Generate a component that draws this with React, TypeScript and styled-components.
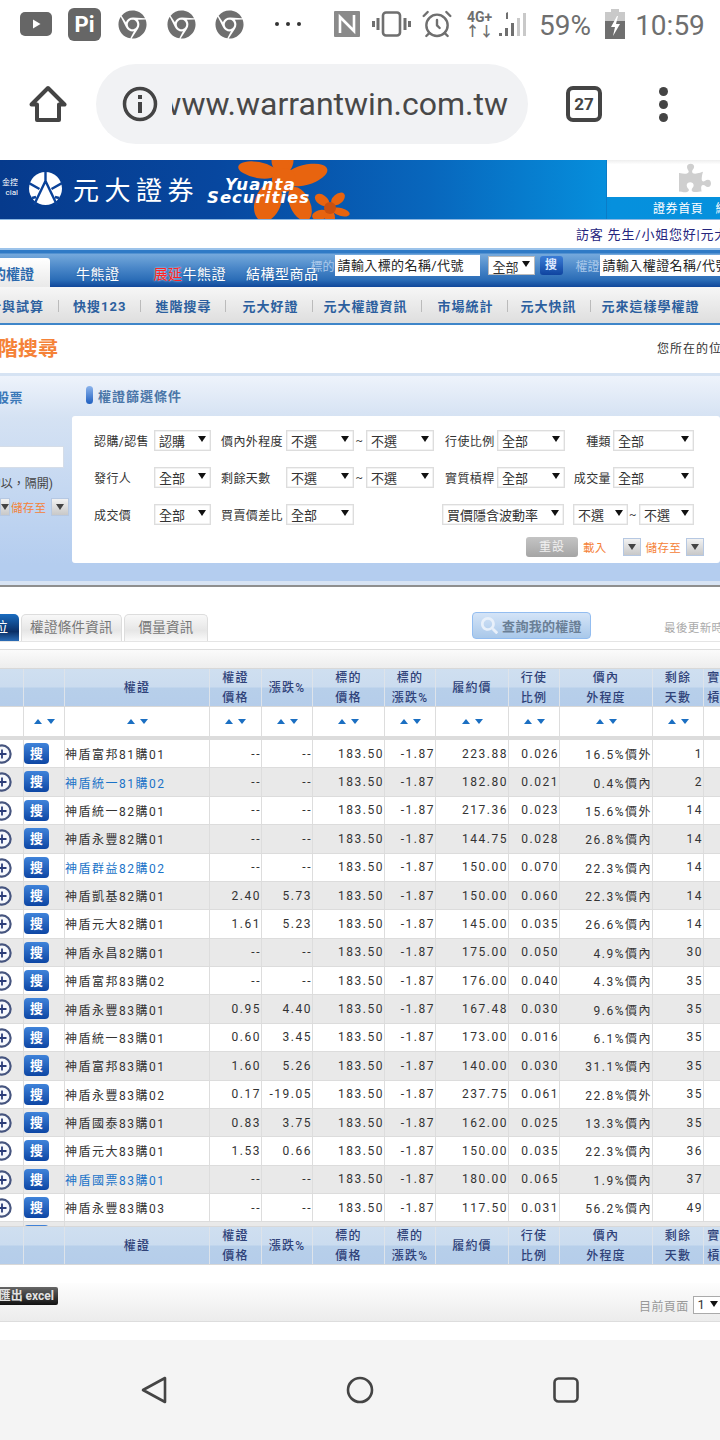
import React from 'react'
import styled, { createGlobalStyle } from 'styled-components'
import { AlarmClock } from 'lucide-react'
import { FaChrome, FaPuzzlePiece, FaSearch } from 'react-icons/fa'

const FONT = `Roboto, 'Noto Sans CJK TC', sans-serif`
const COLS = '24px 41px 145px 52px 51px 72px 51px 73px 51px 93px 51px 34px'

const GlobalStyle = createGlobalStyle`
  html, body { margin: 0; padding: 0; background: #fff; }
  body { font-family: ${FONT}; }
`
const Page = styled.div`
  width: 720px;
  height: 1440px;
  overflow: hidden;
  display: flex;
  flex-direction: column;
  background: #fff;
`

/* android chrome */
const StatusBar = styled.div`
  height: 48px;
  flex: none;
  display: flex;
  align-items: center;
  color: #6f6f6f;
`
const Slot = styled.div<{ $w: number; $ml: number }>`
  width: ${({ $w }) => $w}px;
  margin-left: ${({ $ml }) => $ml}px;
  flex: none;
  display: flex;
  align-items: center;
  justify-content: center;
`
const PiBadge = styled.div`
  width: 33px;
  height: 33px;
  border-radius: 6px;
  background: #666;
  color: #fff;
  font-size: 22px;
  font-weight: 700;
  text-align: center;
  line-height: 33px;
`
const StatusText = styled.div`
  font-size: 28px;
  line-height: 32px;
  margin-top: 3px;
  white-space: nowrap;
`
const NetText = styled.div`
  font-size: 14px;
  line-height: 14px;
  font-weight: 700;
  text-align: center;
  white-space: pre;
`
const Toolbar = styled.div`
  height: 112px;
  flex: none;
  display: flex;
  align-items: center;
  color: #444;
`
const UrlPill = styled.div`
  width: 432px;
  height: 80px;
  margin: 0 0 0 29px;
  border-radius: 40px;
  background: #f1f2f4;
  display: flex;
  align-items: center;
  padding: 0 20px 0 26px;
  box-sizing: border-box;
`
const InfoIcon = styled.svg`
  flex: none;
`
const UrlClip = styled.div`
  flex: 1;
  margin-left: 14px;
  overflow: hidden;
  display: flex;
  justify-content: flex-end;
  font-size: 32px;
  color: #484848;
  white-space: nowrap;
`
const TabCount = styled.div`
  width: 36px;
  height: 36px;
  box-sizing: border-box;
  margin-left: 38px;
  border: 4px solid #444;
  border-radius: 7px;
  font-size: 17px;
  font-weight: 700;
  line-height: 28px;
  text-align: center;
  color: #444;
`
const MenuDots = styled.div`
  margin-left: 57px;
  display: flex;
  flex-direction: column;
  gap: 4px;
  i {
    width: 9px;
    height: 9px;
    border-radius: 50%;
    background: #444;
  }
`

/* site banner */
const Banner = styled.div`
  height: 60px;
  flex: none;
  display: flex;
  background: linear-gradient(90deg, #063a8c 0%, #07479f 30%, #0867bd 60%, #0690dd 85%, #0591dd 100%);
  border-bottom: 1px solid #8db8e2;
  box-sizing: border-box;
  color: #fff;
  overflow: hidden;
`
const BrandArea = styled.div`
  position: relative;
  flex: 1;
  display: flex;
  align-items: center;
`
const TinyBrand = styled.div`
  width: 18px;
  font-size: 8px;
  line-height: 10px;
  white-space: nowrap;
  overflow: hidden;
  display: flex;
  flex-direction: column;
  align-items: flex-end;
  margin-top: -3px;
`
const LogoSvg = styled.svg`
  margin-left: 11px;
  flex: none;
  margin-top: -2px;
`
const BrandName = styled.div`
  margin: -3px 0 0 11px;
  font-size: 26px;
  letter-spacing: 5.5px;
  white-space: nowrap;
`
const Flowers = styled.svg`
  position: absolute;
  left: 236px;
  top: 0;
`
const BrandLatin = styled.div`
  position: relative;
  margin: 3px 0 0 8px;
  font: italic 700 16px/13px 'DejaVu Sans', sans-serif;
  white-space: nowrap;
  b {
    display: block;
    padding-left: 18px;
    font-size: 16.5px;
    letter-spacing: 1.2px;
  }
  span {
    display: block;
    font-size: 16.5px;
    letter-spacing: 1px;
  }
`
const BannerSide = styled.div`
  width: 114px;
  flex: none;
  border-left: 1px solid #0a7cc7;
  box-sizing: border-box;
  display: flex;
  flex-direction: column;
`
const PuzzleBox = styled.div`
  height: 37px;
  flex: none;
  background: linear-gradient(#eee, #fff 12%);
  color: #cfcfcf;
  padding: 2px 0 0 72px;
  box-sizing: border-box;
`
const SideLinks = styled.div`
  padding-left: 46px;
  font-size: 12px;
  line-height: 24px;
  letter-spacing: 0.6px;
  white-space: nowrap;
  display: flex;
  gap: 12px;
`
const Greeting = styled.div`
  height: 28px;
  flex: none;
  padding: 1px 0 0 576px;
  box-sizing: border-box;
  font-size: 13px;
  line-height: 28px;
  letter-spacing: 0.8px;
  color: #25257e;
  white-space: nowrap;
  overflow: hidden;
`

/* main navigation */
const MainNav = styled.div`
  height: 39px;
  flex: none;
  box-sizing: border-box;
  border-top: 2px solid #9cc3ea;
  background: linear-gradient(#2f7ac6 0, #2f7ac6 3px, #75a9dc 4px, #4a87c8 18px, #2a6cb6 30px, #10479a 37px);
  display: flex;
  align-items: flex-end;
  color: #fff;
  overflow: hidden;
  white-space: nowrap;
`
const ActiveTab = styled.div`
  width: 50px;
  height: 29px;
  flex: none;
  overflow: hidden;
  display: flex;
  justify-content: flex-end;
  background: linear-gradient(#fff, #e9e9e9);
  border-radius: 0 3px 0 0;
  color: #2c69ad;
  font-size: 14px;
  font-weight: 700;
  line-height: 32px;
  padding-right: 16px;
  box-sizing: border-box;
`
const NavTab = styled.div<{ $ml: number }>`
  margin-left: ${({ $ml }) => $ml}px;
  height: 29px;
  font-size: 14px;
  letter-spacing: 0.5px;
  line-height: 32px;
  text-shadow: 0 0 2px rgba(20, 60, 120, 0.5);
  em {
    color: #f22;
    font-style: normal;
    text-shadow: 0 0 2px #fff;
  }
`
const NavSearch = styled.div`
  align-self: stretch;
  margin-left: -8px;
  display: flex;
  align-items: center;
  padding-bottom: 6px;
  font-size: 12px;
  color: #a9c8ea;
`
const SearchInput = styled.div<{ $w: number }>`
  width: ${({ $w }) => $w}px;
  height: 21px;
  flex: none;
  box-sizing: border-box;
  background: #fff;
  color: #222;
  font-size: 13px;
  line-height: 22px;
  letter-spacing: 0.4px;
  padding-left: 3px;
  overflow: hidden;
`
const ArrowGlyph = styled.i`
  position: absolute;
  right: 4px;
  top: 4px;
  border-style: solid;
  border-width: 6px 4px 0;
  border-color: #111 transparent transparent;
`
const NavSelect = styled.div`
  width: 47px;
  height: 19px;
  margin-left: 8px;
  box-sizing: border-box;
  background: #fff;
  border: 1px solid #bbb;
  color: #333;
  font-size: 13px;
  line-height: 21px;
  padding-left: 4px;
  position: relative;
`
const SearchBtn = styled.div`
  width: 23px;
  height: 19px;
  margin: 0 13px 0 5px;
  border-radius: 3px;
  background: linear-gradient(#3a7cd6, #0f44a0);
  color: #dfeaff;
  font-size: 12px;
  font-weight: 700;
  line-height: 19px;
  text-align: center;
`
const SubNav = styled.div`
  height: 38px;
  flex: none;
  box-sizing: border-box;
  padding-top: 1px;
  background: linear-gradient(#f6f6f6, #dedede);
  border-bottom: 2px solid #3f86c9;
  display: flex;
  align-items: center;
  gap: 14px;
  color: #2c5f9e;
  font-size: 13px;
  font-weight: 700;
  letter-spacing: 1px;
  white-space: nowrap;
  overflow: hidden;
`
const SubFirst = styled.div`
  width: 44px;
  flex: none;
  overflow: hidden;
  display: flex;
  justify-content: flex-end;
`
const SubItem = styled.div<{ $dx: number }>`
  margin-left: ${({ $dx }) => $dx}px;
`
const SubSep = styled.i`
  width: 1px;
  height: 12px;
  flex: none;
  background: #bbb;
`

/* page title */
const TitleRow = styled.div`
  height: 48px;
  flex: none;
  box-sizing: border-box;
  padding-bottom: 4px;
  display: flex;
  align-items: center;
  justify-content: space-between;
  white-space: nowrap;
`
const PageTitle = styled.div`
  width: 58px;
  overflow: hidden;
  display: flex;
  justify-content: flex-end;
  color: #f58238;
  font-size: 20px;
  font-weight: 700;
`
const Crumb = styled.div`
  width: 63px;
  overflow: hidden;
  color: #333;
  font-size: 12px;
  letter-spacing: 1px;
`

/* filter panel */
const FilterPanel = styled.div`
  height: 212px;
  flex: none;
  box-sizing: border-box;
  display: flex;
  border-top: 3px solid #d6e3f3;
  border-bottom: 4px solid #d8e4f4;
  box-shadow: 0 2px 0 #8f8f8f;
  background: linear-gradient(#eef3fb, #d5e2f3 20%, #b4cdef 92%);
`
const FilterSide = styled.div`
  width: 72px;
  flex: none;
  color: #3a78b8;
  white-space: nowrap;
`
const SideTitle = styled.div`
  height: 40px;
  width: 23px;
  overflow: hidden;
  display: flex;
  justify-content: flex-end;
  align-items: center;
  font-size: 13px;
  font-weight: 700;
  letter-spacing: 0.5px;
`
const SideInput = styled.div`
  width: 64px;
  height: 22px;
  margin-top: 30px;
  background: #fff;
  border: 1px solid #d5dde8;
  border-left: 0;
  box-sizing: border-box;
`
const SideHint = styled.div`
  width: 53px;
  margin-top: 6px;
  overflow: hidden;
  display: flex;
  justify-content: flex-end;
  color: #444;
  font-size: 12px;
  line-height: 20px;
`
const SideActions = styled.div`
  margin-top: 4px;
  display: flex;
  align-items: center;
  gap: 1px;
`
const OrangeLink = styled.span<{ $ml?: number }>`
  margin-left: ${({ $ml }) => $ml ?? 0}px;
  flex: none;
  color: #f58238;
  font-size: 11.5px;
  letter-spacing: 0.3px;
`
const ArrowBtn = styled.div<{ $w?: number; $ml?: number }>`
  width: ${({ $w }) => $w ?? 18}px;
  height: 18px;
  margin-left: ${({ $ml }) => $ml ?? 0}px;
  flex: none;
  box-sizing: border-box;
  border: 1px solid #b6c8e2;
  background: linear-gradient(#f2f2f2, #c8c8c8);
  display: flex;
  align-items: center;
  justify-content: center;
  &::after {
    content: '';
    border-style: solid;
    border-width: 6px 4px 0;
    border-color: #444 transparent transparent;
  }
`
const FilterMain = styled.div`
  flex: 1;
  min-width: 0;
`
const FilterHead = styled.div`
  height: 40px;
  box-sizing: border-box;
  padding: 0 0 2px 14px;
  display: flex;
  align-items: center;
  gap: 5px;
  color: #4a76a8;
  font-size: 13px;
  font-weight: 700;
  letter-spacing: 1px;
  i {
    width: 7px;
    height: 18px;
    border-radius: 4px;
    background: linear-gradient(#8cb4ec, #1f5fc0);
  }
`
const FilterCard = styled.div`
  height: 147px;
  background: #fff;
  border-radius: 3px;
  box-sizing: border-box;
  padding: 13px 0 0 22px;
  color: #333;
  font-size: 12px;
  letter-spacing: 0.4px;
  white-space: nowrap;
`
const FormRow = styled.div<{ $cols: string }>`
  height: 22px;
  margin-bottom: 15px;
  display: grid;
  grid-template-columns: ${({ $cols }) => $cols};
  align-items: center;
`
const FieldLabel = styled.div<{ $right?: boolean; $pl?: number }>`
  padding-left: ${({ $pl }) => $pl ?? 0}px;
  text-align: ${({ $right }) => ($right ? 'right' : 'left')};
  padding-right: ${({ $right }) => ($right ? 2 : 0)}px;
  font-size: 12px;
`
const Tilde = styled.div`
  text-align: center;
  font-size: 11px;
  padding-right: 1px;
`
const PickerBox = styled.div`
  height: 21px;
  box-sizing: border-box;
  border: 1px solid #ddd;
  background: #fff;
  box-shadow: inset 0 0 0 0.5px #e5e5e5;
  display: flex;
  align-items: center;
  justify-content: space-between;
  padding: 0 4px 0 4px;
  font-size: 13px;
  color: #333;
  letter-spacing: 0;
  &::after {
    content: '';
    margin-top: -2px;
    border-style: solid;
    border-width: 6px 4px 0;
    border-color: #111 transparent transparent;
  }
`
const FormActions = styled.div`
  margin-top: -3px;
  display: flex;
  align-items: center;
`
const ResetBtn = styled.div`
  width: 52px;
  height: 20px;
  margin-left: 432px;
  flex: none;
  border-radius: 3px;
  background: linear-gradient(#c4c4c4, #a5a5a5);
  color: #f1f1f1;
  font-size: 12px;
  line-height: 20px;
  text-align: center;
  letter-spacing: 1px;
`

/* result tabs */
const TabRow = styled.div`
  height: 34px;
  margin-top: 23px;
  flex: none;
  box-sizing: border-box;
  border-bottom: 1px solid #e5e5e5;
  display: flex;
  align-items: flex-end;
  white-space: nowrap;
`
const CurrentTab = styled.div`
  width: 19px;
  height: 27px;
  flex: none;
  overflow: hidden;
  display: flex;
  justify-content: flex-end;
  box-sizing: border-box;
  padding-right: 11px;
  border-radius: 0 5px 0 0;
  background: linear-gradient(#1a6cc0, #0a2f66 65%, #2a6cb6);
  color: #fff;
  font-size: 14px;
  line-height: 26px;
`
const ResultTab = styled.div<{ $w: number; $ml: number }>`
  width: ${({ $w }) => $w}px;
  margin-left: ${({ $ml }) => $ml}px;
  height: 27px;
  flex: none;
  box-sizing: border-box;
  border: 1px solid #ddd;
  border-bottom: 0;
  border-radius: 5px 5px 0 0;
  background: linear-gradient(#f8f8f8, #e6e6e6 60%, #fafafa);
  color: #777;
  font-size: 13.5px;
  letter-spacing: 0.3px;
  line-height: 25px;
  text-align: center;
`
const MyWarrantBtn = styled.div`
  width: 119px;
  height: 27px;
  margin: 0 0 2px 264px;
  flex: none;
  box-sizing: border-box;
  border: 1px solid #93bdf0;
  border-radius: 4px;
  background: linear-gradient(#d4e4f7, #a9c8ea);
  display: flex;
  align-items: center;
  justify-content: center;
  gap: 4px;
  color: #6a7f96;
  font-size: 13px;
  font-weight: 700;
  letter-spacing: 0.3px;
  svg { color: #e8f0fa; }
`
const Updated = styled.div`
  margin: 0 0 6px 73px;
  color: #aaa;
  font-size: 11.5px;
  letter-spacing: 0.4px;
`

/* data table */
const TableBar = styled.div`
  height: 19px;
  margin-top: 7px;
  flex: none;
  box-sizing: border-box;
  border-top: 1px solid #ddd;
  background: linear-gradient(#fbfbfb, #ededed);
`
const HeadRow = styled.div`
  height: 37px;
  flex: none;
  display: grid;
  grid-template-columns: ${COLS};
  background: linear-gradient(#cfdff0, #cbdcef 48%, #b7cfea 52%, #b5cdea);
  color: #2f4279;
  font-size: 12px;
  letter-spacing: 1.2px;
  font-weight: 500;
  line-height: 20px;
  text-align: center;
  white-space: nowrap;
  border-top: 1px solid #d8d8d8;
  border-bottom: 1px solid #d8d8d8;
`
const HeadCell = styled.div`
  display: flex;
  flex-direction: column;
  justify-content: center;
  border-right: 1px solid #dde3ea;
  overflow: hidden;
`
const SortRow = styled.div`
  height: 29px;
  flex: none;
  display: grid;
  grid-template-columns: ${COLS};
  border-bottom: 4px solid #dcdcdc;
`
const SortCell = styled.div`
  display: flex;
  align-items: center;
  justify-content: center;
  gap: 5px;
  border-right: 1px solid #ddd;
`
const SortArrow = styled.i<{ $down?: boolean }>`
  border-style: solid;
  border-color: transparent;
  border-width: ${({ $down }) => ($down ? '5px 4px 0' : '0 4px 5px')};
  border-top-color: ${({ $down }) => ($down ? '#1b6fc2' : 'transparent')};
  border-bottom-color: ${({ $down }) => ($down ? 'transparent' : '#1b6fc2')};
`
const RowsClip = styled.div`
  height: 486px;
  flex: none;
  overflow: hidden;
`
const DataRow = styled.div<{ $alt: boolean }>`
  height: 28.375px;
  box-sizing: border-box;
  display: grid;
  grid-template-columns: ${COLS};
  background: ${({ $alt }) => ($alt ? '#e9e9e9' : '#fff')};
  border-bottom: 1px solid #dcdcdc;
  color: #333;
  font-size: 12px;
  letter-spacing: 1.5px;
  white-space: nowrap;
`
const Cell = styled.div<{ $left?: boolean; $link?: boolean }>`
  display: flex;
  align-items: center;
  justify-content: ${({ $left }) => ($left ? 'flex-start' : 'flex-end')};
  border-right: 1px solid #ddd;
  color: ${({ $link }) => ($link ? '#1a73c8' : 'inherit')};
  overflow: hidden;
`
const IconCell = styled.div`
  display: flex;
  align-items: flex-start;
  padding-top: 3px;
  border-right: 1px solid #ddd;
  overflow: hidden;
`
const PlusIcon = styled.svg`
  flex: none;
  margin: 1px 0 0 -8px;
`
const FindBtn = styled.div`
  width: 25px;
  height: 21px;
  border-radius: 4px;
  background: linear-gradient(#3f83da, #0d46a4);
  color: #fff;
  font-size: 13px;
  font-weight: 700;
  letter-spacing: 0;
  line-height: 21px;
  text-align: center;
`
const TableGap = styled.div`
  height: 18px;
  flex: none;
`
const PagerBar = styled.div`
  height: 39px;
  flex: none;
  box-sizing: border-box;
  background: linear-gradient(#fdfdfd, #ececec);
  border-bottom: 1px solid #ddd;
  display: flex;
  align-items: flex-start;
  justify-content: space-between;
  padding-top: 4px;
`
const ExcelBtn = styled.div`
  width: 58px;
  height: 18px;
  overflow: hidden;
  display: flex;
  justify-content: flex-end;
  box-sizing: border-box;
  padding-right: 4px;
  border-radius: 0 2px 2px 0;
  background: linear-gradient(#666, #111);
  color: #e2e2e2;
  font-size: 12px;
  font-weight: 700;
  line-height: 18px;
  white-space: nowrap;
`
const Pager = styled.div`
  display: flex;
  align-items: center;
  gap: 4px;
  margin-top: 9px;
  width: 81px;
  color: #999;
  font-size: 12px;
  letter-spacing: 0.4px;
  white-space: nowrap;
`
const PagerSelect = styled.div`
  width: 30px;
  height: 18px;
  flex: none;
  box-sizing: border-box;
  border: 1px solid #aaa;
  background: #fff;
  color: #333;
  font-size: 13px;
  line-height: 16px;
  padding-left: 4px;
  white-space: nowrap;
  &::after {
    content: '';
    display: inline-block;
    margin: 0 0 2px 5px;
    border-style: solid;
    border-width: 6px 4px 0;
    border-color: #111 transparent transparent;
  }
`

/* android nav bar */
const NavBar = styled.div`
  height: 100px;
  margin-top: 18px;
  flex: none;
  background: #f4f4f4;
  display: flex;
  align-items: center;
  justify-content: space-between;
  padding: 0 140px;
`

type Row = [string, string, string, string, string, string, string, boolean?]

const rows: Row[] = [
  ['神盾富邦81購01', '--', '--', '223.88', '0.026', '16.5%價外', '1'],
  ['神盾統一81購02', '--', '--', '182.80', '0.021', '0.4%價內', '2', true],
  ['神盾統一82購01', '--', '--', '217.36', '0.023', '15.6%價外', '14'],
  ['神盾永豐82購01', '--', '--', '144.75', '0.028', '26.8%價內', '14'],
  ['神盾群益82購02', '--', '--', '150.00', '0.070', '22.3%價內', '14', true],
  ['神盾凱基82購01', '2.40', '5.73', '150.00', '0.060', '22.3%價內', '14'],
  ['神盾元大82購01', '1.61', '5.23', '145.00', '0.035', '26.6%價內', '14'],
  ['神盾永昌82購01', '--', '--', '175.00', '0.050', '4.9%價內', '30'],
  ['神盾富邦83購02', '--', '--', '176.00', '0.040', '4.3%價內', '35'],
  ['神盾永豐83購01', '0.95', '4.40', '167.48', '0.030', '9.6%價內', '35'],
  ['神盾統一83購01', '0.60', '3.45', '173.00', '0.016', '6.1%價內', '35'],
  ['神盾富邦83購01', '1.60', '5.26', '140.00', '0.030', '31.1%價內', '35'],
  ['神盾永豐83購02', '0.17', '-19.05', '237.75', '0.061', '22.8%價外', '35'],
  ['神盾國泰83購01', '0.83', '3.75', '162.00', '0.025', '13.3%價內', '35'],
  ['神盾元大83購01', '1.53', '0.66', '150.00', '0.035', '22.3%價內', '36'],
  ['神盾國票83購01', '--', '--', '180.00', '0.065', '1.9%價內', '37', true],
  ['神盾永豐83購03', '--', '--', '117.50', '0.031', '56.2%價內', '49'],
]

const headers = [
  [''], [''], ['權證'], ['權證', '價格'], ['漲跌%'], ['標的', '價格'], ['標的', '漲跌%'],
  ['履約價'], ['行使', '比例'], ['價內', '外程度'], ['剩餘', '天數'], ['實質', '槓桿'],
]

const subLinks: [string, number][] = [
  ['快搜123', 0],
  ['進階搜尋', 0],
  ['元大好證', 2],
  ['元大權證資訊', -4],
  ['市場統計', 1],
  ['元大快訊', -2],
  ['元來這樣學權證', -4],
]

const Header = () => (
  <HeadRow>
    {headers.map((lines, i) => (
      <HeadCell key={i}>
        {lines.map((l) => (
          <div key={l}>{l}</div>
        ))}
      </HeadCell>
    ))}
  </HeadRow>
)

const Plus = () => (
  <PlusIcon width="20" height="20" viewBox="0 0 20 20">
    <circle cx="10" cy="10" r="8.6" fill="#f6f8fc" stroke="#46557f" strokeWidth="2.2" />
    <path d="M5.5 10h9M10 5.5v9" stroke="#2b3c78" strokeWidth="1.8" />
  </PlusIcon>
)

const Picker = ({ label }: { label: string }) => <PickerBox>{label}</PickerBox>

const ROW_A = '60px 57px 75px 68px 12px 68px 63px 68px 48px 81px'
const ROW_C = '60px 57px 75px 68px 88px 122px 9px 55px 11px 55px'

export default function App() {
  return (
    <Page>
      <GlobalStyle />
      <StatusBar>
        <Slot $w={32} $ml={20}>
          <svg width="32" height="24" viewBox="0 0 32 24">
            <rect width="32" height="24" rx="5" fill="#666" />
            <path d="M13 7.5l7.5 4.5-7.5 4.5z" fill="#fff" />
          </svg>
        </Slot>
        <Slot $w={33} $ml={16}>
          <PiBadge>Pi</PiBadge>
        </Slot>
        <Slot $w={30} $ml={16}>
          <FaChrome size={29} />
        </Slot>
        <Slot $w={30} $ml={19}>
          <FaChrome size={29} />
        </Slot>
        <Slot $w={30} $ml={18}>
          <FaChrome size={29} />
        </Slot>
        <Slot $w={30} $ml={29}>
          <svg width="28" height="6" viewBox="0 0 28 6">
            <circle cx="3" cy="3" r="2" fill="#333" />
            <circle cx="14" cy="3" r="2" fill="#333" />
            <circle cx="25" cy="3" r="2" fill="#333" />
          </svg>
        </Slot>
        <Slot $w={26} $ml={31}>
          <svg width="26" height="26" viewBox="0 0 26 26">
            <rect width="26" height="26" rx="1" fill="#8a8a8a" />
            <path d="M6 22V6l14 14V4" fill="none" stroke="#fff" strokeWidth="2.6" />
          </svg>
        </Slot>
        <Slot $w={39} $ml={12}>
          <svg width="39" height="26" viewBox="0 0 39 26" fill="none" stroke="#6f6f6f">
            <rect x="11" y="1.5" width="17" height="23" rx="3" strokeWidth="2.6" />
            <path d="M6 7v12M1.5 10v6M33 7v12M37.5 10v6" strokeWidth="3" />
          </svg>
        </Slot>
        <Slot $w={32} $ml={10}>
          <AlarmClock size={34} strokeWidth={1.8} />
        </Slot>
        <Slot $w={33} $ml={10}>
          <NetText>{'4G+\n↑↓'}</NetText>
        </Slot>
        <Slot $w={28} $ml={2}>
          <svg width="28" height="26" viewBox="0 0 28 26">
            <path d="M1 25h3v-3H1zM7 25h3v-8H7zM13 25h3V12h-3z" fill="#6f6f6f" />
            <path d="M19 25h3V7h-3zM25 25h3V2h-3z" fill="#c9c9c9" />
            <path d="M8 2l2-1v7H8z" fill="#6f6f6f" />
          </svg>
        </Slot>
        <Slot $w={52} $ml={13}>
          <StatusText>59%</StatusText>
        </Slot>
        <Slot $w={20} $ml={14}>
          <svg width="20" height="30" viewBox="0 0 20 30">
            <path d="M6 0h8v3h6v27H0V3h6z" fill="#c9c9c9" />
            <path d="M0 12h20v18H0z" fill="#6f6f6f" />
            <path d="M12 7l-6 11h4l-2 9 7-12h-4l2-8z" fill="#fff" />
          </svg>
        </Slot>
        <Slot $w={72} $ml={9}>
          <StatusText>10:59</StatusText>
        </Slot>
      </StatusBar>

      <Toolbar>
        <Slot $w={38} $ml={29}>
          <svg width="38" height="38" viewBox="0 0 38 38" fill="none" stroke="#444" strokeWidth="4" strokeLinejoin="round">
            <path d="M2.5 19.5L19 3l16.5 16.5H30V35H8V19.5z" />
          </svg>
        </Slot>
        <UrlPill>
          <InfoIcon width="36" height="36" viewBox="0 0 36 36">
            <circle cx="18" cy="18" r="15.5" fill="none" stroke="#444" strokeWidth="3.5" />
            <rect x="16" y="16" width="4" height="11" fill="#444" />
            <rect x="16" y="9" width="4" height="4" fill="#444" />
          </InfoIcon>
          <UrlClip>www.warrantwin.com.tw</UrlClip>
        </UrlPill>
        <TabCount>27</TabCount>
        <MenuDots>
          <i />
          <i />
          <i />
        </MenuDots>
      </Toolbar>

      <Banner>
        <BrandArea>
          <TinyBrand>
            <span>金控</span>
            <span>cial</span>
          </TinyBrand>
          <LogoSvg width="33" height="33" viewBox="0 0 33 33">
            <circle cx="16.5" cy="16.5" r="16.5" fill="#fff" />
            <path d="M16.5 0v9M16.500 9L5 33M16.500 9L28 33M0 11l10.500 6M33 11l-10.500 6M3 26l4-1M30 26l-4-1" fill="none" stroke="#0a4299" strokeWidth="2.4" />
          </LogoSvg>
          <BrandName>元大證券</BrandName>
          <Flowers width="120" height="60" viewBox="0 0 120 60">
            <g fill="#e8640f">
              <ellipse cx="46.500" cy="0" rx="11" ry="14" />
              <ellipse cx="22" cy="10" rx="20" ry="8" transform="rotate(10 22 10)" />
              <ellipse cx="69" cy="15" rx="23" ry="10" transform="rotate(-15 69 15)" />
              <ellipse cx="32" cy="42" rx="13" ry="20" transform="rotate(20 32 42)" />
              <ellipse cx="64" cy="44" rx="10" ry="18" transform="rotate(-25 64 44)" />
              <circle cx="48" cy="20" r="12" />
              <ellipse cx="86" cy="40" rx="8" ry="5" transform="rotate(35 86 40)" />
              <ellipse cx="102" cy="39" rx="8" ry="5" transform="rotate(-40 102 39)" />
              <ellipse cx="105" cy="52" rx="9" ry="4" transform="rotate(15 105 52)" />
              <ellipse cx="94" cy="58" rx="5" ry="8" />
              <ellipse cx="84" cy="55" rx="8" ry="5" transform="rotate(-15 84 55)" />
              <circle cx="94" cy="48" r="6" fill="#c9500f" />
            </g>
          </Flowers>
          <BrandLatin>
            <b>Yuanta</b>
            <span>Securities</span>
          </BrandLatin>
        </BrandArea>
        <BannerSide>
          <PuzzleBox>
            <FaPuzzlePiece size={32} />
          </PuzzleBox>
          <SideLinks>
            <span>證券首頁</span>
            <span>總</span>
          </SideLinks>
        </BannerSide>
      </Banner>

      <Greeting>訪客 先生/小姐您好|元大</Greeting>

      <MainNav>
        <ActiveTab>權證專區的權證</ActiveTab>
        <NavTab $ml={26}>牛熊證</NavTab>
        <NavTab $ml={34}>
          <em>展延</em>牛熊證
        </NavTab>
        <NavTab $ml={20}>結構型商品</NavTab>
        <NavSearch>
          標的
          <SearchInput $w={145}>請輸入標的名稱/代號</SearchInput>
          <NavSelect>
            全部
            <ArrowGlyph />
          </NavSelect>
          <SearchBtn>搜</SearchBtn>
          權證
          <SearchInput $w={120}>請輸入權證名稱/代號</SearchInput>
        </NavSearch>
      </MainNav>

      <SubNav>
        <SubFirst>權證分析與試算</SubFirst>
        {subLinks.map(([label, dx]) => (
          <React.Fragment key={label}>
            <SubSep />
            <SubItem $dx={dx}>{label}</SubItem>
          </React.Fragment>
        ))}
      </SubNav>

      <TitleRow>
        <PageTitle>進階搜尋</PageTitle>
        <Crumb>您所在的位置</Crumb>
      </TitleRow>

      <FilterPanel>
        <FilterSide>
          <SideTitle>個股票</SideTitle>
          <SideInput />
          <SideHint>可多筆的以，隔開)</SideHint>
          <SideActions>
            <ArrowBtn $w={10} />
            <OrangeLink>儲存至</OrangeLink>
            <ArrowBtn $ml={4} />
          </SideActions>
        </FilterSide>
        <FilterMain>
          <FilterHead>
            <i />
            權證篩選條件
          </FilterHead>
          <FilterCard>
            <FormRow $cols={ROW_A}>
              <FieldLabel>認購/認售</FieldLabel>
              <Picker label="認購" />
              <FieldLabel $pl={10}>價內外程度</FieldLabel>
              <Picker label="不選" />
              <Tilde>~</Tilde>
              <Picker label="不選" />
              <FieldLabel $pl={11}>行使比例</FieldLabel>
              <Picker label="全部" />
              <FieldLabel $right>種類</FieldLabel>
              <Picker label="全部" />
            </FormRow>
            <FormRow $cols={ROW_A}>
              <FieldLabel>發行人</FieldLabel>
              <Picker label="全部" />
              <FieldLabel $pl={10}>剩餘天數</FieldLabel>
              <Picker label="不選" />
              <Tilde>~</Tilde>
              <Picker label="不選" />
              <FieldLabel $pl={11}>實質槓桿</FieldLabel>
              <Picker label="全部" />
              <FieldLabel $right>成交量</FieldLabel>
              <Picker label="全部" />
            </FormRow>
            <FormRow $cols={ROW_C}>
              <FieldLabel>成交價</FieldLabel>
              <Picker label="全部" />
              <FieldLabel $pl={10}>買賣價差比</FieldLabel>
              <Picker label="全部" />
              <div />
              <Picker label="買價隱含波動率" />
              <div />
              <Picker label="不選" />
              <Tilde>~</Tilde>
              <Picker label="不選" />
            </FormRow>
            <FormActions>
              <ResetBtn>重設</ResetBtn>
              <OrangeLink $ml={5}>載入</OrangeLink>
              <ArrowBtn $ml={16} />
              <OrangeLink $ml={5}>儲存至</OrangeLink>
              <ArrowBtn $ml={5} />
            </FormActions>
          </FilterCard>
        </FilterMain>
      </FilterPanel>

      <TabRow>
        <CurrentTab>定位</CurrentTab>
        <ResultTab $w={101} $ml={2}>
          權證條件資訊
        </ResultTab>
        <ResultTab $w={84} $ml={2}>
          價量資訊
        </ResultTab>
        <MyWarrantBtn>
          <FaSearch size={17} />
          查詢我的權證
        </MyWarrantBtn>
        <Updated>最後更新時間</Updated>
      </TabRow>

      <TableBar />
      <Header />
      <SortRow>
        {headers.map((_, i) => (
          <SortCell key={i}>
            {i > 0 && i < 11 && (
              <>
                <SortArrow />
                <SortArrow $down />
              </>
            )}
          </SortCell>
        ))}
      </SortRow>
      <RowsClip>
        {rows.map((r, i) => (
          <DataRow key={r[0]} $alt={i % 2 === 1}>
            <IconCell>
              <Plus />
            </IconCell>
            <IconCell>
              <FindBtn>搜</FindBtn>
            </IconCell>
            <Cell $left $link={r[7]}>
              {r[0]}
            </Cell>
            <Cell>{r[1]}</Cell>
            <Cell>{r[2]}</Cell>
            <Cell>183.50</Cell>
            <Cell>-1.87</Cell>
            <Cell>{r[3]}</Cell>
            <Cell>{r[4]}</Cell>
            <Cell>{r[5]}</Cell>
            <Cell>{r[6]}</Cell>
            <Cell />
          </DataRow>
        ))}
        <DataRow $alt>
          <IconCell />
          <IconCell>
            <FindBtn />
          </IconCell>
        </DataRow>
      </RowsClip>
      <Header />
      <TableGap />
      <PagerBar>
        <ExcelBtn>匯出 excel</ExcelBtn>
        <Pager>
          目前頁面
          <PagerSelect>1</PagerSelect>
        </Pager>
      </PagerBar>

      <NavBar>
        <svg width="28" height="30" viewBox="0 0 28 30" fill="none" stroke="#444" strokeWidth="2.6" strokeLinejoin="round">
          <path d="M25 3v24L3 15z" />
        </svg>
        <svg width="28" height="28" viewBox="0 0 28 28" fill="none" stroke="#444" strokeWidth="2.6">
          <circle cx="14" cy="14" r="12" />
        </svg>
        <svg width="28" height="28" viewBox="0 0 28 28" fill="none" stroke="#444" strokeWidth="2.6">
          <rect x="2.500" y="2.500" width="23" height="23" rx="4" />
        </svg>
      </NavBar>
    </Page>
  )
}
